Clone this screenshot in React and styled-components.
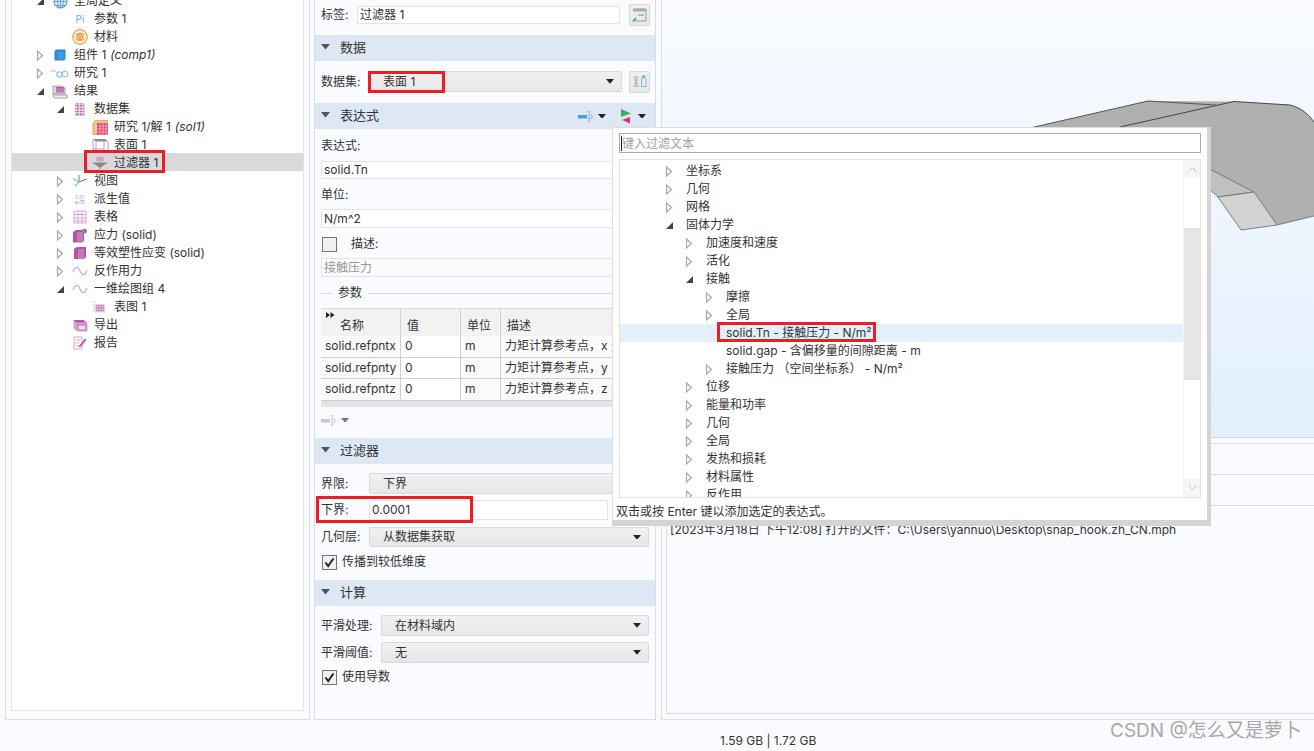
import React from "react";
import styled, {createGlobalStyle} from "styled-components";

const GlobalStyle = createGlobalStyle`
  html, body {
    margin: 0;
    padding: 0;
    background: #f9fbff;
    overflow: hidden;
  }
  * {
    box-sizing: border-box;
  }
`

const FONT = `Inter, "Noto Sans CJK SC", sans-serif`

const Root = styled.div`
  position: relative;
  width: 1314px;
  height: 751px;
  overflow: hidden;
  display: flex;
  flex-direction: column;
  background: #f9fbff;
  color: #333;
  font-family: ${FONT};
  font-size: 12px;
  line-height: 18px;
`

const Workspace = styled.div`
  display: flex;
  height: 720px;
  padding-left: 5px;
`

const TreePanel = styled.div`
  width: 305px;
  border: 1px solid #dcdde0;
  border-top: 0;
  padding: 0 5px 8px;
`

const TreeBox = styled.div`
  height: 100%;
  background: #fff;
  border: 1px solid #e2e3e6;
  border-top: 0;
  overflow: hidden;
`

const TreeList = styled.div`
  margin-top: -9px;
`

const TreeRow = styled.div`
  display: flex;
  align-items: center;
  height: 18px;
  white-space: nowrap;
  padding: 2px 0 0 ${p => 22 + p.$level * 20}px;
  background: ${p => (p.$selected ? "#d9d9db" : "transparent")};
`

const ArrowSlot = styled.span`
  display: flex;
  align-items: center;
  justify-content: center;
  width: 12px;
  height: 18px;
  flex: none;
`

const IconSlot = styled.span`
  display: flex;
  align-items: center;
  justify-content: center;
  width: 28px;
  height: 18px;
  flex: none;
`

const Tag = styled.em`
  font-style: italic;
  margin-left: 4px;
`

const PiMark = styled.span`
  color: #6aaee6;
  font-size: 10px;
  letter-spacing: 0;
`

const MidPanel = styled.div`
  width: 342px;
  margin-left: 4px;
  border: 1px solid #dcdde0;
  border-top: 0;
  display: flex;
  flex-direction: column;
`

const Row = styled.div`
  display: flex;
  align-items: center;
  gap: ${p => p.$gap || 0}px;
  margin: ${p => p.$top || 0}px ${p => p.$right ?? 6}px 0 6px;
  height: ${p => p.$h || 18}px;
`

const Label = styled.span`
  flex: none;
  width: ${p => (p.$w ? `${p.$w}px` : "auto")};
`

const SectionHead = styled.div`
  display: flex;
  align-items: center;
  height: 26px;
  margin-top: ${p => p.$top || 0}px;
  background: #dde8f4;
  font-size: 13px;
  padding: 0 9px 2px 6px;
`

const HeadTitle = styled.span`
  margin-left: 10px;
  flex: 1;
`

const HeadTools = styled.span`
  display: flex;
  align-items: center;
  gap: 5px;
  margin-top: 2px;
`

const TextInput = styled.div`
  flex: 1;
  min-width: 0;
  height: 100%;
  display: flex;
  align-items: center;
  padding-left: 2px;
  background: ${p => (p.$disabled ? "#fafbfd" : "#fff")};
  color: ${p => (p.$disabled ? "#999" : "#333")};
  border: 1px solid #e3e4e7;
  white-space: nowrap;
  overflow: hidden;
`

const Select = styled.div`
  flex: 1;
  height: 100%;
  display: flex;
  align-items: center;
  justify-content: space-between;
  padding: 0 7px 0 13px;
  background: linear-gradient(#f1f1f1, #e7e7e7);
  border: 1px solid #dadada;
  border-radius: 2px;
`

const ToolButton = styled.div`
  flex: none;
  width: 21px;
  height: 22px;
  margin-left: ${p => p.$ml}px;
  display: flex;
  align-items: center;
  justify-content: center;
  background: linear-gradient(#f1f1f1, #e7e7e7);
  border: 1px solid #d8d8d8;
  border-radius: 2px;
`

const CheckBox = styled.span`
  flex: none;
  width: 15px;
  height: 15px;
  display: flex;
  align-items: center;
  justify-content: center;
  background: #f0f0f0;
  border: 1px solid #767676;
  margin-left: 1px;
`

const Legend = styled.div`
  display: flex;
  align-items: center;
  gap: 6px;
  margin: 7px 6px 0;
  height: 18px;
  &::before {
    content: "";
    width: 11px;
    border-top: 1px solid #d8d8d8;
  }
  &::after {
    content: "";
    flex: 1;
    border-top: 1px solid #d8d8d8;
  }
`

const ParamTable = styled.div`
  margin: 6px 6px 0;
  height: 99px;
  border-bottom: 6px solid #e4e4e4;
`

const TableRow = styled.div`
  display: grid;
  grid-template-columns: 80px 60px 40px 1fr;
  height: ${p => (p.$head ? "28px" : "21.5px")};
  background: ${p => (p.$head ? "#f2f2f2" : "#fafafa")};
  border-bottom: ${p => (p.$head ? "0" : "1px solid #cfcfcf")};
  border-top: ${p => (p.$head ? "1px solid #dcdcdc" : "0")};
`

const Cell = styled.div`
  display: flex;
  align-items: ${p => (p.$head ? "flex-end" : "center")};
  padding: ${p => (p.$head ? "0 6px 1px" : "0 4px")};
  padding-left: ${p => (p.$indent ? 19 : p.$head ? 6 : 4)}px;
  border-right: 1px solid #cfcfcf;
  background: ${p => (p.$white ? "#fff" : "transparent")};
  white-space: nowrap;
  overflow: hidden;
  position: relative;
`

const SortMark = styled.span`
  position: absolute;
  left: 5px;
  top: 3px;
  display: flex;
`

const ViewColumn = styled.div`
  flex: 1;
  margin-left: 5px;
  border-left: 1px solid #dcdde0;
  border-bottom: 1px solid #dcdde0;
  display: flex;
  flex-direction: column;
`

const Viewport = styled.div`
  position: relative;
  height: 438px;
  flex: none;
  overflow: hidden;
  background: linear-gradient(#f9fbff, #e2f0fd);
  border-bottom: 1px solid #d6d7da;
`

const ModelDrawing = styled.svg`
  position: absolute;
  left: 0;
  top: 0;
`

const TabStrip = styled.div`
  height: ${p => p.$h}px;
  flex: none;
  margin-top: ${p => p.$top || 0}px;
  border-top: 1px solid #dcdde0;
`

const LogBox = styled.div`
  flex: 1;
  margin: 0 0 5px 4px;
  border-left: 1px solid #dcdde0;
  border-bottom: 1px solid #dcdde0;
  border-top: 1px solid #dcdde0;
  padding: 15px 3px 0;
  white-space: nowrap;
`

const StatusBar = styled.div`
  flex: 1;
  display: flex;
  align-items: center;
  padding: 10px 0 0 720px;
`

const Watermark = styled.div`
  position: absolute;
  left: 1110px;
  top: 718px;
  font-size: 19px;
  line-height: 26px;
  color: #a8a8a8;
  white-space: nowrap;
`

const Popup = styled.div`
  position: absolute;
  left: 612px;
  top: 127px;
  width: 599px;
  height: 399px;
  background: #fff;
  border-top: 1px solid #dedede;
  border-left: 1px solid #dedede;
  border-right: 4px solid #d4d4d4;
  border-bottom: 6px solid #d4d4d4;
  padding: 5px 6px 0;
  display: flex;
  flex-direction: column;
`

const SearchBox = styled.div`
  height: 20px;
  flex: none;
  display: flex;
  align-items: center;
  border: 1px solid #aaaab4;
  color: #a2a2a2;
  padding: 1px 0 0 1px;
  overflow: hidden;
  white-space: nowrap;
`

const Caret = styled.span`
  width: 1px;
  height: 15px;
  background: #222;
  flex: none;
`

const PickerList = styled.div`
  position: relative;
  height: 339px;
  flex: none;
  margin-top: 6px;
  border: 1px solid #e4e4e4;
  overflow: hidden;
  padding: 2px 17px 0 0;
`

const PickerRow = styled.div`
  display: flex;
  align-items: center;
  height: 18px;
  white-space: nowrap;
  padding-left: ${p => 43 + p.$level * 20}px;
  background: ${p => (p.$active ? "#e2f0fb" : "transparent")};
`

const PickerArrow = styled(ArrowSlot)`
  margin-right: 11px;
`

const ScrollBar = styled.div`
  position: absolute;
  right: 0;
  top: 0;
  bottom: 0;
  width: 17px;
  background: #fff;
  border-left: 1px solid #f4f4f4;
  display: flex;
  flex-direction: column;
`

const ScrollButton = styled.div`
  height: 18px;
  flex: none;
  display: flex;
  align-items: center;
  justify-content: center;
  background: #f6f6f6;
`

const ScrollThumb = styled.div`
  height: 152px;
  margin-top: 50px;
  background: #e6e6e6;
`

const ScrollRest = styled.div`
  flex: 1;
`

const Hint = styled.div`
  flex: 1;
  display: flex;
  align-items: center;
  margin-left: -3px;
  padding-top: 5px;
  white-space: nowrap;
`

const Callout = styled.div`
  position: absolute;
  left: ${p => p.$x}px;
  top: ${p => p.$y}px;
  width: ${p => p.$w}px;
  height: ${p => p.$h}px;
  border: 3px solid #ee1c25;
  pointer-events: none;
`

const Closed = () => (
    <svg width="8" height="11" viewBox="0 0 8 11">
        <path d="M1.5 1 L6.5 5.5 L1.5 10 Z" fill="#fff" stroke="#a8a8a8" strokeWidth="1.2"/>
    </svg>
)

const Open = () => (
    <svg width="9" height="9" viewBox="0 0 9 9">
        <path d="M8 1 V8 H1 Z" fill="#444"/>
    </svg>
)

const Down = ({w = 8, c = "#222"}) => (
    <svg width={w} height={w * 0.6} viewBox="0 0 10 6">
        <path d="M0 0 H10 L5 6 Z" fill={c}/>
    </svg>
)

const Check = () => (
    <svg width="13" height="13" viewBox="0 0 13 13">
        <path d="M2.5 6.5 L5.2 10 L10.5 2.5" fill="none" stroke="#222" strokeWidth="2"/>
    </svg>
)

const PINK = "#b5559f"
const LPINK = "#d9a3cf"

const Wave = () => (
    <svg width="16" height="10" viewBox="0 0 16 10">
        <path d="M1 6 C3 0 6 0 8 5 C10 10 13 10 15 4" fill="none" stroke={LPINK} strokeWidth="1.1"/>
    </svg>
)

const Cube = () => (
    <svg width="15" height="14" viewBox="0 0 15 14">
        <path d="M1 3 L4 1 H13 V11 L11 13 H1 Z" fill={PINK}/>
        <path d="M5 3 H11 V13 H5 Z" fill="#c678b8"/>
    </svg>
)

const Grid = () => (
    <svg width="14" height="14" viewBox="0 0 14 14">
        <path d="M1 1 H13 V13 H1 Z M1 4.5 H13 M1 8 H13 M1 11 H13 M5 1 V13 M9 1 V13" fill="none" stroke={LPINK} strokeWidth="1"/>
    </svg>
)

const icons = {
    globe: (
        <svg width="15" height="15" viewBox="0 0 15 15">
            <circle cx="7.5" cy="7.5" r="6.5" fill="#dbeafa" stroke="#4c92d6"/>
            <path d="M1 7.5 H14 M7.5 1 V14 M2.5 3.5 H12.5 M2.5 11.5 H12.5" stroke="#4c92d6" strokeWidth=".7"/>
            <ellipse cx="7.5" cy="7.5" rx="3" ry="6.5" fill="none" stroke="#4c92d6" strokeWidth=".7"/>
        </svg>
    ),
    pi: <PiMark>Pi</PiMark>,
    material: (
        <svg width="16" height="16" viewBox="0 0 16 16">
            <circle cx="8" cy="8" r="7.3" fill="#fbeedd" stroke="#eea24a" strokeWidth="1.2"/>
            <path d="M4 5.5 H12 M3.5 8 H12.5 M4 10.5 H12 M6 4 V12 M8 3.5 V12.5 M10 4 V12" stroke="#e98a22" strokeWidth="1.2" strokeDasharray="1.5 .8"/>
        </svg>
    ),
    comp: (
        <svg width="12" height="12" viewBox="0 0 12 12">
            <path d="M0.5 2 L2 .5 H11.5 V10 L10 11.5 H0.5 Z" fill="#2f86d0"/>
            <path d="M3 2.5 H10 V10.5 H3 Z" fill="#3d9ae3"/>
        </svg>
    ),
    study: (
        <svg width="18" height="9" viewBox="0 0 18 9">
            <path d="M0.5 3 C2 0.5 3 1 5 3.5" fill="none" stroke="#66b3dd"/>
            <circle cx="8.5" cy="5.5" r="2.7" fill="none" stroke="#66b3dd"/>
            <circle cx="14" cy="5" r="2.9" fill="none" stroke="#7dbfe3"/>
        </svg>
    ),
    results: (
        <svg width="16" height="15" viewBox="0 0 16 15">
            <path d="M1 9 L3 11 H15 V14 H3 L1 12 Z" fill="#ededed" stroke="#8a8a8a" strokeWidth=".8"/>
            <path d="M1 2 H10 L13 4 V10 H3 L1 8 Z" fill="#d8d8d8" stroke="#9a9a9a" strokeWidth=".8"/>
            <path d="M4 3 H12 V8.5 H4 Z" fill={PINK}/>
            <path d="M4 5 H12 M4 7 H12" stroke="#e4bcdd" strokeWidth=".7"/>
        </svg>
    ),
    dataset: (
        <svg width="10" height="13" viewBox="0 0 10 13">
            <path d="M0 0 H10 V13 H0 Z" fill="#e8cfe3"/>
            <path d="M0 2.5 H10 M0 5.5 H10 M0 8.5 H10 M0 11.5 H10 M2.5 0 V13 M6 0 V13" stroke="#b56ea8" strokeWidth="1" strokeDasharray="1.5 1"/>
        </svg>
    ),
    sol: (
        <svg width="17" height="15" viewBox="0 0 17 15">
            <path d="M1 3 L3 .5 H16 L14 3 V14.5 H1 Z" fill="#f6c58a" stroke="#ea9a42" strokeWidth=".8"/>
            <path d="M5 3 H16 V14.5 H5 Z" fill="#dc3f75"/>
            <path d="M5 6 H16 M5 9 H16 M5 12 H16 M8 3 V14.5 M11 3 V14.5 M14 3 V14.5" stroke="#f8c9d8" strokeWidth=".7"/>
        </svg>
    ),
    surface: (
        <svg width="17" height="15" viewBox="0 0 17 15">
            <path d="M1 1 H13 L16 3.5 H4 Z" fill="#8c8c8c"/>
            <path d="M1 1 V11 L4 14 H16 V3.5 M4 3.5 V14 M1 11 H12 V3.5" fill="none" stroke="#cf8fc2" strokeWidth="1"/>
        </svg>
    ),
    filter: (
        <svg width="16" height="15" viewBox="0 0 16 15">
            <path d="M4 0.5 H12 V5.5 H4 Z" fill="#e7bfde"/>
            <path d="M4 2 H12 M4 4 H12 M6 .5 V5.5 M8 .5 V5.5 M10 .5 V5.5" stroke="#c77fb9" strokeWidth=".6"/>
            <path d="M0.5 6.5 H15.5 L8 12 Z" fill="#8a8a8a"/>
            <path d="M8 12 V15" stroke="#d79ccb" strokeWidth="1.4"/>
        </svg>
    ),
    view: (
        <svg width="18" height="14" viewBox="0 0 18 14">
            <path d="M8 8 V1" stroke="#4c92d6" strokeWidth="1.1"/>
            <path d="M8 8 L2 4.5" stroke="#7ec98f" strokeWidth="1.1"/>
            <path d="M8 8 L16 5" stroke="#e0527f" strokeWidth="1.1"/>
            <path d="M8 8 L4 12" stroke="#7ec98f" strokeWidth="1.1"/>
        </svg>
    ),
    derived: (
        <svg width="12" height="11" viewBox="0 0 12 11">
            <text x="6" y="4.5" textAnchor="middle" fontSize="4.6" fill={LPINK}>8.85</text>
            <text x="6" y="10" textAnchor="middle" fontSize="4.6" fill={PINK}>e-12</text>
        </svg>
    ),
    table: <Grid/>,
    stress: (
        <svg width="16" height="15" viewBox="0 0 16 15">
            <path d="M1 4 L4 2 H12 V13 L10 14.5 H1 Z" fill={PINK}/>
            <path d="M5 4 H11 V14 H5 Z" fill="#c678b8"/>
            <circle cx="12.5" cy="3" r="2.6" fill="#888"/>
        </svg>
    ),
    strain: <Cube/>,
    wave: <Wave/>,
    plot: (
        <svg width="14" height="13" viewBox="0 0 14 13">
            <path d="M1 0 V11 H13" fill="none" stroke="#bbb" strokeWidth=".8" strokeDasharray="2 1"/>
            <path d="M3 4 H11 V10 H3 Z M3 7 H11 M6 4 V10 M8.5 4 V10" fill="#e7c6e1" stroke={PINK} strokeWidth=".6"/>
        </svg>
    ),
    exportIcon: (
        <svg width="15" height="13" viewBox="0 0 15 13">
            <path d="M0.5 1 H11 L14.5 4 V12.5 H4 L0.5 9.5 Z" fill="#d9a3cf"/>
            <path d="M0.5 1 H10 L13 3.5 H3.5 Z" fill={PINK}/>
            <path d="M5 6 H13 V11 H5 Z" fill="#f1dcec" stroke={PINK} strokeWidth=".7"/>
        </svg>
    ),
    report: (
        <svg width="14" height="14" viewBox="0 0 14 14">
            <path d="M1 1 H9 V13 H1 Z" fill="#fff" stroke={LPINK}/>
            <path d="M2.5 4 H7.5 M2.5 7 H6 M2.5 10 H6" stroke={LPINK}/>
            <path d="M5.5 10.5 L12 2.5 L13.5 4 L7 11.5 Z" fill={PINK}/>
        </svg>
    ),
}

const treeItems = [
    {level: 0, arrow: "open", icon: "globe", text: "全局定义"},
    {level: 1, arrow: null, icon: "pi", text: "参数 1"},
    {level: 1, arrow: null, icon: "material", text: "材料"},
    {level: 0, arrow: "closed", icon: "comp", text: "组件 1", tag: "(comp1)"},
    {level: 0, arrow: "closed", icon: "study", text: "研究 1"},
    {level: 0, arrow: "open", icon: "results", text: "结果"},
    {level: 1, arrow: "open", icon: "dataset", text: "数据集"},
    {level: 2, arrow: null, icon: "sol", text: "研究 1/解 1", tag: "(sol1)"},
    {level: 2, arrow: null, icon: "surface", text: "表面 1"},
    {level: 2, arrow: null, icon: "filter", text: "过滤器 1", selected: true},
    {level: 1, arrow: "closed", icon: "view", text: "视图"},
    {level: 1, arrow: "closed", icon: "derived", text: "派生值"},
    {level: 1, arrow: "closed", icon: "table", text: "表格"},
    {level: 1, arrow: "closed", icon: "stress", text: "应力 (solid)"},
    {level: 1, arrow: "closed", icon: "strain", text: "等效塑性应变 (solid)"},
    {level: 1, arrow: "closed", icon: "wave", text: "反作用力"},
    {level: 1, arrow: "open", icon: "wave", text: "一维绘图组 4"},
    {level: 2, arrow: null, icon: "plot", text: "表图 1"},
    {level: 1, arrow: null, icon: "exportIcon", text: "导出"},
    {level: 1, arrow: null, icon: "report", text: "报告"},
]

const pickerItems = [
    [0, "closed", "坐标系"],
    [0, "closed", "几何"],
    [0, "closed", "网格"],
    [0, "open", "固体力学"],
    [1, "closed", "加速度和速度"],
    [1, "closed", "活化"],
    [1, "open", "接触"],
    [2, "closed", "摩擦"],
    [2, "closed", "全局"],
    [2, null, "solid.Tn - 接触压力 - N/m²", true],
    [2, null, "solid.gap - 含偏移量的间隙距离 - m"],
    [2, "closed", "接触压力 （空间坐标系） - N/m²"],
    [1, "closed", "位移"],
    [1, "closed", "能量和功率"],
    [1, "closed", "几何"],
    [1, "closed", "全局"],
    [1, "closed", "发热和损耗"],
    [1, "closed", "材料属性"],
    [1, "closed", "反作用"],
]

const params = [
    ["solid.refpntx", "x"],
    ["solid.refpnty", "y"],
    ["solid.refpntz", "z"],
]

const arrowFor = a => (a === "open" ? <Open/> : a === "closed" ? <Closed/> : null)

const PlotTool = ({muted}) => (
    <svg width="15" height="11" viewBox="0 0 15 11">
        <path d="M0 4 H9 V7.5 H0 Z" fill={muted ? "#c9c9c9" : "#4c9be0"}/>
        <path d="M11 1 V10 M9.5 .7 H12.5 M9.5 10.3 H12.5 M11 4 H14 V7.5 H11" fill="none" stroke={muted ? "#c9c9c9" : "#7fb8e8"} strokeWidth=".9"/>
    </svg>
)

const SelectBox = ({children}) => (
    <Select>
        <span>{children}</span>
        <Down/>
    </Select>
)

const Tree = () => (
    <TreePanel>
        <TreeBox>
            <TreeList>
                {treeItems.map(item => (
                    <TreeRow key={item.text} $level={item.level} $selected={item.selected}>
                        <ArrowSlot>{arrowFor(item.arrow)}</ArrowSlot>
                        <IconSlot>{icons[item.icon]}</IconSlot>
                        <span>{item.text}</span>
                        {item.tag && <Tag>{item.tag}</Tag>}
                    </TreeRow>
                ))}
            </TreeList>
        </TreeBox>
    </TreePanel>
)

const Settings = () => (
    <MidPanel>
        <Row $top={6} $right={5}>
            <Label $w={36}>标签:</Label>
            <TextInput>过滤器 1</TextInput>
            <ToolButton $ml={9}>
                <svg width="15" height="14" viewBox="0 0 15 14">
                    <path d="M1 1 H14 V13 H3" fill="none" stroke="#999"/>
                    <path d="M1 1 H14 V3.5 H1 Z" fill="#aaa"/>
                    <path d="M6 7 H12" stroke="#4cc7a8" strokeWidth="1.4"/>
                    <path d="M1 13.5 L4 10" stroke="#2b9a7d" strokeWidth="1.4"/>
                </svg>
            </ToolButton>
        </Row>
        <SectionHead $top={11}><Down w={9} c="#555"/><HeadTitle>数据</HeadTitle></SectionHead>
        <Row $top={10} $h={21} $right={5}>
            <Label $w={48}>数据集:</Label>
            <SelectBox>表面 1</SelectBox>
            <ToolButton $ml={7}>
                <svg width="14" height="13" viewBox="0 0 14 13">
                    <path d="M1 2 H6 M1 5 H5 M1 8 H5 M1 11 H6 M3 2 V11" fill="none" stroke="#aaa"/>
                    <path d="M8.5 3 V11.5 H13 V3" fill="none" stroke="#7db8e6"/>
                    <path d="M10.7 .5 V4 M9 2 L10.7 .5 L12.4 2" fill="none" stroke="#3f97dc"/>
                </svg>
            </ToolButton>
        </Row>
        <SectionHead $top={11}>
            <Down w={9} c="#555"/>
            <HeadTitle>表达式</HeadTitle>
            <HeadTools>
                <PlotTool/>
                <Down/>
                <svg width="13" height="15" viewBox="0 0 13 15" style={{marginLeft: 9}}>
                    <path d="M1 0 L11 4.5 L1 8 Z" fill="#3fae5a"/>
                    <path d="M10 8 V14.5 L2 11 Z" fill="#e0306e"/>
                </svg>
                <Down/>
            </HeadTools>
        </SectionHead>
        <Row $top={8}>表达式:</Row>
        <Row $top={6}><TextInput>solid.Tn</TextInput></Row>
        <Row $top={7}>单位:</Row>
        <Row $top={5} $h={19}><TextInput>N/m^2</TextInput></Row>
        <Row $top={7} $gap={14}><CheckBox/><span>描述:</span></Row>
        <Row $top={5} $h={19}><TextInput $disabled>接触压力</TextInput></Row>
        <Legend>参数</Legend>
        <ParamTable>
            <TableRow $head>
                <Cell $head $indent>
                    <SortMark>
                        <svg width="9" height="6" viewBox="0 0 9 6">
                            <path d="M0 0 L4 3 L0 6 Z M4.5 0 L8.5 3 L4.5 6 Z" fill="#222"/>
                        </svg>
                    </SortMark>
                    名称
                </Cell>
                <Cell $head>值</Cell>
                <Cell $head>单位</Cell>
                <Cell $head>描述</Cell>
            </TableRow>
            {params.map(([name, axis]) => (
                <TableRow key={name}>
                    <Cell>{name}</Cell>
                    <Cell $white>0</Cell>
                    <Cell>m</Cell>
                    <Cell>力矩计算参考点，{axis} 坐标</Cell>
                </TableRow>
            ))}
        </ParamTable>
        <Row $top={5} $h={16} $gap={5}>
            <PlotTool muted/>
            <Down c="#777"/>
        </Row>
        <SectionHead $top={10}><Down w={9} c="#555"/><HeadTitle>过滤器</HeadTitle></SectionHead>
        <Row $top={9} $h={21}>
            <Label $w={48}>界限:</Label>
            <SelectBox>下界</SelectBox>
        </Row>
        <Row $top={6} $h={20} $right={47}>
            <Label $w={48}>下界:</Label>
            <TextInput>0.0001</TextInput>
        </Row>
        <Row $top={7} $h={20}>
            <Label $w={48}>几何层:</Label>
            <SelectBox>从数据集获取</SelectBox>
        </Row>
        <Row $top={6} $gap={5}><CheckBox><Check/></CheckBox><span>传播到较低维度</span></Row>
        <SectionHead $top={9}><Down w={9} c="#555"/><HeadTitle>计算</HeadTitle></SectionHead>
        <Row $top={9} $h={21}>
            <Label $w={60}>平滑处理:</Label>
            <SelectBox>在材料域内</SelectBox>
        </Row>
        <Row $top={6} $h={21}>
            <Label $w={60}>平滑阈值:</Label>
            <SelectBox>无</SelectBox>
        </Row>
        <Row $top={5} $gap={5}><CheckBox><Check/></CheckBox><span>使用导数</span></Row>
    </MidPanel>
)

const Graphics = () => (
    <ViewColumn>
        <Viewport>
            <ModelDrawing width="652" height="437" viewBox="662 0 652 437">
                <path d="M1030 128 L1148 101 L1234 101.5 L1290 105 C1302 108 1309 115 1314 122 V216 L1277 225 L1254 192 L1200 165 Z" fill="#b0b0b0"/>
                <path d="M1200 164 L1254 192 L1218 197 L1205 185 Z" fill="#c0c0c0" stroke="#666" strokeWidth=".8"/>
                <path d="M1218 197 L1254 192 L1277 225 L1241 230 Z" fill="#d3d3d3" stroke="#666" strokeWidth=".8"/>
                <path d="M1030 128 L1148 101 L1216 105" fill="none" stroke="#555" strokeWidth="1"/>
                <path d="M1120 127 L1234 101.5 L1290 105 C1302 108 1309 115 1314 122" fill="none" stroke="#444" strokeWidth="1"/>
                <path d="M1277 225 L1314 216" fill="none" stroke="#666" strokeWidth=".8"/>
            </ModelDrawing>
        </Viewport>
        <TabStrip $top={5} $h={31}/>
        <TabStrip $h={31}/>
        <LogBox>[2023年3月18日 下午12:08] 打开的文件：C:\Users\yannuo\Desktop\snap_hook.zh_CN.mph</LogBox>
    </ViewColumn>
)

const ExpressionPicker = () => (
    <Popup>
        <SearchBox><Caret/>键入过滤文本</SearchBox>
        <PickerList>
            {pickerItems.map(([level, arrow, text, active]) => (
                <PickerRow key={level + text} $level={level} $active={active}>
                    <PickerArrow>{arrowFor(arrow)}</PickerArrow>
                    <span>{text}</span>
                </PickerRow>
            ))}
            <ScrollBar>
                <ScrollButton>
                    <svg width="9" height="6" viewBox="0 0 9 6"><path d="M1 5 L4.5 1.5 L8 5" fill="none" stroke="#c4c4c4"/></svg>
                </ScrollButton>
                <ScrollThumb/>
                <ScrollRest/>
                <ScrollButton>
                    <svg width="9" height="6" viewBox="0 0 9 6"><path d="M1 1 L4.5 4.5 L8 1" fill="none" stroke="#c4c4c4"/></svg>
                </ScrollButton>
            </ScrollBar>
        </PickerList>
        <Hint>双击或按 Enter 键以添加选定的表达式。</Hint>
    </Popup>
)

class App extends React.Component {
    render() {
        return (
            <Root>
                <GlobalStyle/>
                <Workspace>
                    <Tree/>
                    <Settings/>
                    <Graphics/>
                </Workspace>
                <StatusBar>1.59 GB | 1.72 GB</StatusBar>
                <ExpressionPicker/>
                <Callout $x={84} $y={150} $w={81} $h={23}/>
                <Callout $x={368} $y={71} $w={77} $h={22}/>
                <Callout $x={316} $y={496} $w={157} $h={27}/>
                <Callout $x={717} $y={322} $w={159} $h={20}/>
                <Watermark>CSDN @怎么又是萝卜</Watermark>
            </Root>
        );
    }
}

export default App;
